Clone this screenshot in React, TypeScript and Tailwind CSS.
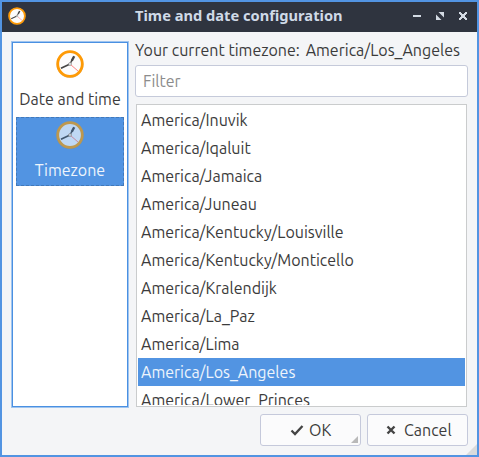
import React from 'react';

const zones = [
  'America/Inuvik',
  'America/Iqaluit',
  'America/Jamaica',
  'America/Juneau',
  'America/Kentucky/Louisville',
  'America/Kentucky/Monticello',
  'America/Kralendijk',
  'America/La_Paz',
  'America/Lima',
  'America/Los_Angeles',
  'America/Lower_Princes',
];

function Clock({ className, selected = false }: { className: string; selected?: boolean }) {
  return (
    <svg className={className} viewBox="0 0 28 28">
      <circle cx="14" cy="14.4" r="13.4" fill="#7a756b" opacity="0.35" />
      <circle cx="14" cy="14" r="12.3" fill={selected ? '#bfd8f4' : '#fcfcfc'} stroke={selected ? '#bd984f' : '#fe9a06'} strokeWidth="2.8" />
      <path d="M14.5 14.5l7.5 6.5" stroke={selected ? '#c67f95' : '#ff7474'} strokeWidth="0.9" />
      <path d="M5 18.3l9-4.3" stroke={selected ? '#40566e' : '#444'} strokeWidth="1.6" />
      <path d="M14 14l2-3.8" stroke={selected ? '#40566e' : '#444'} strokeWidth="1.4" />
      <path d="M15.8 10.8l2.4-4.6" stroke={selected ? '#40566e' : '#444'} strokeWidth="2.4" />
      <circle cx="14" cy="14" r="1.4" fill={selected ? '#d5e5f7' : '#fff'} stroke="#777" strokeWidth="0.7" />
    </svg>
  );
}

export default function App() {
  return (
    <div className="flex h-[457px] w-[479px] flex-col border-2 border-[#5294e2] bg-[#f4f5f7] font-['Ubuntu','Noto_Sans',sans-serif] text-[16px] text-[#3b3b3b]">
      <header className="flex h-[30px] shrink-0 items-center bg-[#2f343f] pr-[8px] pl-[6px]">
        <Clock className="-mt-[2px] size-[18px]" />
        <h1 className="-mt-[4px] ml-[109px] flex-1 whitespace-nowrap font-['Noto_Sans',sans-serif] text-[14.667px] leading-[26px] font-bold text-[#cfdae7]">
          Time and date configuration
        </h1>
        <svg className="-mt-[2px] mr-[2px] h-[8px] w-[54px]" viewBox="0 0 54 8" fill="#d3dae3">
          <rect x="0" y="3" width="8" height="2" />
          <path d="M25.5 0H31v5.5zM23 2.5L28.5 8H23z" />
          <path d="M46 0h2v1h1v1h2v-1h1v-1h2v2h-1v1h-1v2h1v1h1v2h-2v-1h-1v-1h-2v1h-1v1h-2v-2h1v-1h1v-2h-1v-1h-1z" />
        </svg>
      </header>
      <main className="flex h-[375px] shrink-0 pt-[10px] pl-[10px]">
        <nav className="flex h-[365px] w-[116px] shrink-0 flex-col border border-[#4a90e2] bg-white p-[3px] shadow-[0_0_0_1px_#a0c5ef]">
          <div className="flex h-[71px] flex-col items-center pt-[4px]">
            <Clock className="size-[28px]" />
            <span className="mt-[10px] whitespace-nowrap leading-[22px]">Date and time</span>
          </div>
          <div className="flex h-[69px] w-[108px] flex-col items-center border border-dashed border-[#4279b9] bg-[#5294e2] pt-[3px] text-[#eef4fc]">
            <Clock className="size-[28px]" selected />
            <span className="mt-[10px] leading-[22px]">Timezone</span>
          </div>
        </nav>
        <section className="ml-[7px] w-[333px]">
          <div className="-mt-[3px] flex h-[22px] justify-between pr-[8px] leading-[22px] whitespace-nowrap">
            <span>Your current timezone:</span>
            <span>America/Los_Angeles</span>
          </div>
          <input
            className="mt-[4px] block h-[32px] w-[333px] rounded-[3px] border border-[#c5cada] bg-white px-[7px] leading-[22px] outline-none placeholder:text-[#8c8c8c]"
            placeholder="Filter"
          />
          <div className="mt-[7px] ml-[1px] h-[303px] w-[331px] border border-[#cacccd] bg-white p-px">
            <ul className="h-[299px] overflow-hidden">
              {zones.map((name) => (
                <li
                  key={name}
                  className={`h-[28px] pl-[3px] leading-[28px] whitespace-nowrap ${name === 'America/Los_Angeles' ? 'bg-[#5294e2] text-[#eef4fc]' : ''}`}
                >
                  {name}
                </li>
              ))}
            </ul>
          </div>
        </section>
      </main>
      <footer className="relative flex flex-1 justify-end gap-[6px] pt-[7px] pr-[9px]">
        <button className="relative flex h-[32px] w-[101px] items-center rounded-[3px] border border-[#c5c9db] bg-[#fbfbfc] pl-[29px]">
          <svg className="h-[14px] w-[14px]" viewBox="0 0 14 14">
            <path d="M1.5 7.5l3.5 3.5 7.5-8" fill="none" stroke="#444" strokeWidth="2.3" />
          </svg>
          <span className="ml-[5px]">OK</span>
          <svg className="absolute right-[2px] bottom-[2px] size-[7px]" viewBox="0 0 7 7">
            <path d="M7 0v7H0z" fill="#b9b9b9" />
          </svg>
        </button>
        <button className="flex h-[32px] w-[101px] items-center rounded-[3px] border border-[#c5c9db] bg-[#fbfbfc] pl-[18px]">
          <svg className="h-[10px] w-[10px]" viewBox="0 0 10 10">
            <path d="M1.5 1.5l7 7M8.5 1.5l-7 7" stroke="#444" strokeWidth="2.4" />
          </svg>
          <span className="ml-[8px]">Cancel</span>
        </button>
        <svg className="absolute right-0 bottom-0 size-[11px]" viewBox="0 0 11 11">
          <path d="M11 0v11H0z" fill="#d9dbdc" />
        </svg>
      </footer>
    </div>
  );
}
